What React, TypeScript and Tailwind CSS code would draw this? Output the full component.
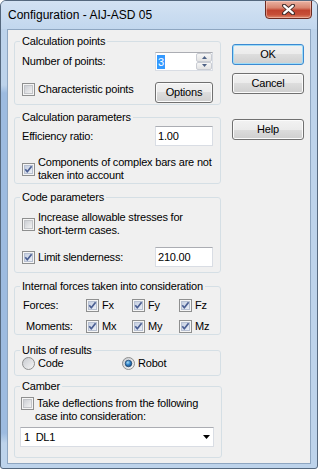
import React from "react";

function CheckBox({ checked }: { checked?: boolean }) {
  return (
    <svg width="13" height="13" viewBox="0 0 13 13" className="shrink-0 block">
      <defs>
        <linearGradient id="cbIn" x1="0" y1="0" x2="1" y2="1">
          <stop offset="0" stopColor="#c9ccd2" />
          <stop offset="1" stopColor="#f4f4f4" />
        </linearGradient>
        <linearGradient id="cbInC" x1="0" y1="0" x2="1" y2="1">
          <stop offset="0" stopColor="#c3cde0" />
          <stop offset="1" stopColor="#eef1f7" />
        </linearGradient>
      </defs>
      <rect x="0.5" y="0.5" width="12" height="12" fill="#f5f5f5" stroke="#8e8f8f" />
      <rect x="2.5" y="2.5" width="8" height="8" fill={checked ? "url(#cbInC)" : "url(#cbIn)"} stroke={checked ? "#b7c0d2" : "#c2c4c8"} />
      {checked && (
        <path d="M3.3 6.3 L5.3 8.8 L9.6 3.2" stroke="#4b5f93" strokeWidth="1.7" fill="none" strokeLinejoin="round" />
      )}
    </svg>
  );
}

function Radio({ checked }: { checked?: boolean }) {
  return (
    <svg width="13" height="13" viewBox="0 0 13 13" className="shrink-0 block">
      <defs>
        <linearGradient id="rIn" x1="0" y1="0" x2="1" y2="1">
          <stop offset="0" stopColor="#c6c9ce" />
          <stop offset="1" stopColor="#f7f7f7" />
        </linearGradient>
        <radialGradient id="rDot" cx="0.4" cy="0.35" r="0.7">
          <stop offset="0" stopColor="#a9dcf7" />
          <stop offset="0.5" stopColor="#2f82c8" />
          <stop offset="1" stopColor="#12447c" />
        </radialGradient>
      </defs>
      <circle cx="6.5" cy="6.5" r="6" fill="url(#rIn)" stroke="#8e8f8f" />
      {checked && <circle cx="6.5" cy="6.5" r="3.3" fill="url(#rDot)" stroke="#1d3f66" strokeWidth="0.7" />}
    </svg>
  );
}

function WinButton({ children, def, className = "" }: { children: React.ReactNode; def?: boolean; className?: string }) {
  return (
    <div
      className={`h-[21px] rounded-[3px] border flex items-center justify-center bg-[linear-gradient(to_bottom,#f2f2f2_0%,#ebebeb_50%,#dddddd_50%,#cfcfcf_100%)] ${
        def ? "border-[#3b8ad2] shadow-[inset_0_0_0_1px_#9fdcf7]" : "border-[#707070] shadow-[inset_0_0_0_1px_#fbfbfb]"
      } ${className}`}
    >
      {children}
    </div>
  );
}

function TextBox({ value }: { value: string }) {
  return (
    <div className="w-[58px] h-[20px] bg-white border border-[#d9dde4] border-t-[#abadb3] flex items-center pl-[2px]">
      {value}
    </div>
  );
}

function Group({ title, className = "", children }: { title: string; className?: string; children: React.ReactNode }) {
  return (
    <fieldset className={`border border-[#d5dfe5] rounded-[3px] px-[7px] ${className}`}>
      <legend className="-ml-[2px] px-[2px] leading-[13px]">{title}</legend>
      {children}
    </fieldset>
  );
}

function SpinArrow({ up }: { up?: boolean }) {
  return (
    <div className="flex-1 border border-[#c9ccd3] rounded-[2px] bg-[linear-gradient(to_bottom,#f6f6f6,#e3e3e3)] flex items-center justify-center">
      <svg width="5" height="3" viewBox="0 0 5 3" className="block">
        <path d={up ? "M0 3 L2.5 0 L5 3 Z" : "M0 0 L2.5 3 L5 0 Z"} fill="#4d6185" />
      </svg>
    </div>
  );
}

export default function App() {
  return (
    <div className="w-[318px] h-[469px] flex flex-col bg-[#bdd3eb] border border-[#55687e] rounded-t-[6px] rounded-b-[3px] overflow-hidden font-['Liberation_Sans',Arial,sans-serif] text-[11px] leading-[13px] tracking-[-0.2px] text-black">
      <div className="h-[28px] shrink-0 relative flex items-center pl-[7px] bg-[linear-gradient(to_bottom,#d3e2f3,#c2d7ee)]">
        <span className="text-[12px] tracking-normal pt-[1px]">Configuration - AIJ-ASD 05</span>
        <div className="absolute right-[5px] -top-[1px] w-[47px] h-[19px] rounded-b-[4px] border border-[#6b2b22] bg-[linear-gradient(to_bottom,#eab3a3_0%,#d88570_40%,#c0432e_55%,#c74f38_80%,#de8a6d_100%)] shadow-[inset_0_0_0_1px_rgba(255,220,210,0.45)] flex items-center justify-center">
          <svg width="13" height="11" viewBox="0 0 13 11" className="block">
            <path d="M2 1.5 L11 9.5 M11 1.5 L2 9.5" stroke="#3d2a28" strokeWidth="4" strokeLinecap="round" />
            <path d="M2.2 1.8 L10.8 9.2 M10.8 1.8 L2.2 9.2" stroke="#ffffff" strokeWidth="2.2" strokeLinecap="round" />
          </svg>
        </div>
      </div>
      <div className="flex-1 flex mb-[4px]">
        <div className="w-[6px] shrink-0 bg-[linear-gradient(to_bottom,#bdd3eb_0px,#bdd3eb_56px,#9dbbe0_64px,#9dbbe0_404px,#bdd3eb_414px)]" />
        <div className="flex-1 border border-[#8ea6c1] bg-[#f0f0f0] flex pl-[6px] pt-[5px]">
          <div className="w-[207px] flex flex-col">
            <Group title="Calculation points">
              <div className="flex items-center justify-between mt-[4px] h-[19px]">
                <span>Number of points:</span>
                <div className="w-[58px] h-[19px] bg-white border border-[#d9dde4] border-t-[#abadb3] flex">
                  <div className="flex-1 flex items-center pl-[1px]">
                    <span className="bg-[#3399ff] text-white px-[1px] leading-[14px]">3</span>
                  </div>
                  <div className="w-[16px] flex flex-col">
                    <SpinArrow up />
                    <SpinArrow />
                  </div>
                </div>
              </div>
              <div className="flex items-start justify-between mt-[11px] mb-[1px]">
                <div className="flex items-center gap-[3px] mt-[1px]">
                  <CheckBox />
                  <span>Characteristic points</span>
                </div>
                <WinButton className="w-[58px]">Options</WinButton>
              </div>
            </Group>

            <Group title="Calculation parameters" className="mt-[6px]">
              <div className="flex items-center justify-between mt-[2px]">
                <span>Efficiency ratio:</span>
                <TextBox value="1.00" />
              </div>
              <div className="flex items-center gap-[3px] mt-[10px] mb-[1px]">
                <CheckBox checked />
                <span>
                  Components of complex bars are not
                  <br />
                  taken into account
                </span>
              </div>
            </Group>

            <Group title="Code parameters" className="mt-[7px]">
              <div className="flex items-center gap-[3px] mt-[7px]">
                <CheckBox />
                <span>
                  Increase allowable stresses for
                  <br />
                  short-term cases.
                </span>
              </div>
              <div className="flex items-center justify-between mt-[10px] mb-[5px]">
                <div className="flex items-center gap-[3px]">
                  <CheckBox checked />
                  <span>Limit slenderness:</span>
                </div>
                <TextBox value="210.00" />
              </div>
            </Group>

            <Group title="Internal forces taken into consideration" className="mt-[7px]">
              <div className="grid grid-cols-[64px_46px_47px_1fr] items-center mt-[6px]">
                <span className="pl-[1px]">Forces:</span>
                <div className="flex items-center gap-[3px]"><CheckBox checked /><span>Fx</span></div>
                <div className="flex items-center gap-[3px]"><CheckBox checked /><span>Fy</span></div>
                <div className="flex items-center gap-[3px]"><CheckBox checked /><span>Fz</span></div>
              </div>
              <div className="grid grid-cols-[64px_46px_47px_1fr] items-center mt-[8px] mb-[1px]">
                <span className="pl-[4px]">Moments:</span>
                <div className="flex items-center gap-[3px]"><CheckBox checked /><span>Mx</span></div>
                <div className="flex items-center gap-[3px]"><CheckBox checked /><span>My</span></div>
                <div className="flex items-center gap-[3px]"><CheckBox checked /><span>Mz</span></div>
              </div>
            </Group>

            <Group title="Units of results" className="mt-[9px]">
              <div className="flex items-center mb-[5px]">
                <div className="w-[100px] flex items-center gap-[3px]"><Radio /><span>Code</span></div>
                <div className="flex items-center gap-[3px]"><Radio checked /><span>Robot</span></div>
              </div>
            </Group>

            <Group title="Camber" className="mt-[4px]">
              <div className="flex items-start gap-[1px] mt-[4px] -ml-[1px]">
                <CheckBox />
                <span>
                  <span className="pl-[2px]">Take deflections from the following</span>
                  <br />
                  case into consideration:
                </span>
              </div>
              <div className="mt-[4px] mb-[10px] -ml-[2px] w-[194px] h-[20px] bg-white border border-[#d9dde4] border-t-[#abadb3] flex items-center pl-[3px] pr-[3px]">
                <span className="flex-1 whitespace-pre">1  DL1</span>
                <svg width="7" height="4" viewBox="0 0 7 4" className="block">
                  <path d="M0 0 L7 0 L3.5 4 Z" fill="#000" />
                </svg>
              </div>
            </Group>
          </div>

          <div className="w-[72px] ml-[11px] mt-[9px] flex flex-col">
            <WinButton def>OK</WinButton>
            <WinButton className="mt-[8px]">Cancel</WinButton>
            <WinButton className="mt-[25px]">Help</WinButton>
          </div>
        </div>
        <div className="w-[6px] shrink-0" />
      </div>
    </div>
  );
}
